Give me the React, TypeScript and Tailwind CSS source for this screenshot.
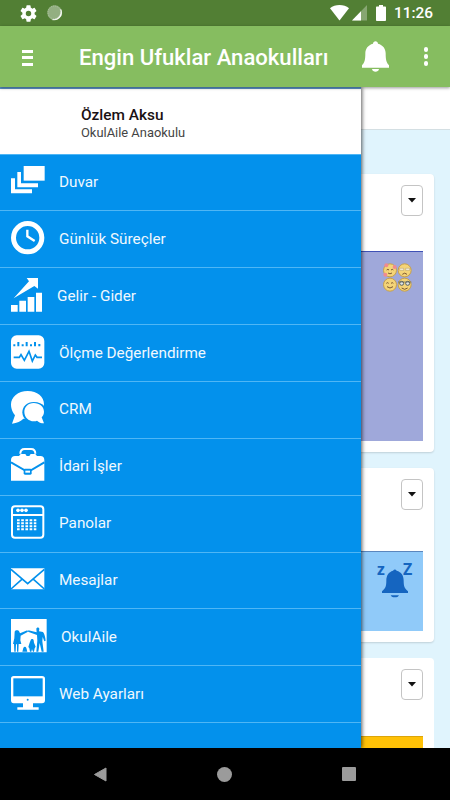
import type { ReactNode } from "react";

type MenuItem = { label: string; width: number; icon: ReactNode };

// every menu icon is drawn on a 102 unit high board, 3 units per pixel
const items: MenuItem[] = [
  {
    label: "Duvar",
    width: 102,
    icon: (
      <g fill="#fff">
        <path d="M38 6h63v44H38z" />
        <path d="M19 24h11v34h51v12H19z" />
        <path d="M0 43h12v33h51v12H0z" />
      </g>
    ),
  },
  {
    label: "Günlük Süreçler",
    width: 102,
    icon: (
      <g fill="none" stroke="#fff">
        <circle cx="50" cy="50" r="42.5" strokeWidth="15" />
        <path d="M49 26v20l22 14" strokeWidth="7" />
      </g>
    ),
  },
  {
    label: "Gelir - Gider",
    width: 96,
    icon: (
      <g fill="#fff">
        <path d="M0 81h20v20H0zM25 68h20v33H25zM50 57h20v44H50zM75 44h18v57H75z" />
        <path d="M8 61L54 10 47 0h34v32l-11-8z" />
      </g>
    ),
  },
  {
    label: "Ölçme Değerlendirme",
    width: 102,
    icon: (
      <g>
        <rect width="100" height="100" y="1" rx="17" fill="#fff" />
        <path
          d="M7 28h6v6H7zM19 21h6v13h-6zM32 28h6v6h-6zM44 21h6v13h-6zM57 28h6v6h-6zM69 21h6v13h-6zM82 27h6v7h-6z"
          fill="#0391ec"
        />
        <path
          d="M8 67h17l5-8 10 17 14-27 10 29 9-18 5 7h15"
          fill="none"
          stroke="#0391ec"
          strokeWidth="5"
        />
      </g>
    ),
  },
  {
    label: "CRM",
    width: 102,
    icon: (
      <g>
        <path
          d="M50 0C21 0 0 18 0 40c0 16 6 25 12 33L3 98c15-2 27-8 34-15 34 4 62-12 62-43C99 17 79 0 50 0z"
          fill="#fff"
        />
        <path
          d="M68 33c-20 0-34 14-34 31s14 32 34 32h32V46c-6-8-17-13-32-13z"
          fill="#0391ec"
        />
        <path
          d="M68 36c-17 0-28 12-28 27s12 28 29 28c4 0 7-1 9-2 5 5 12 8 21 8l-7-18c4-5 7-9 7-17 0-14-13-26-31-26z"
          fill="#fff"
        />
      </g>
    ),
  },
  {
    label: "İdari İşler",
    width: 102,
    icon: (
      <g>
        <path
          d="M0 36c0-8 5-12 12-12h12l5-6h14l4 6h8l4-6h14l5 6h10c8 0 12 4 12 12v62H0z"
          fill="#fff"
        />
        <path
          d="M28 17c0-9 4-14 13-14h19c9 0 13 5 13 14"
          fill="none"
          stroke="#fff"
          strokeWidth="6"
        />
        <path
          d="M0 43l40 23h21l39-23"
          fill="none"
          stroke="#0391ec"
          strokeWidth="6"
        />
        <rect x="38" y="62" width="24" height="18" rx="4" fill="#0391ec" />
        <rect x="43" y="68" width="14" height="6" fill="#fff" />
      </g>
    ),
  },
  {
    label: "Panolar",
    width: 102,
    icon: (
      <g fill="#fff">
        <rect
          x="3"
          y="4"
          width="94"
          height="94"
          rx="9"
          fill="none"
          stroke="#fff"
          strokeWidth="6"
        />
        <path d="M4 27h92v6H4z" />
        <circle cx="21" cy="16" r="5.5" />
        <circle cx="33" cy="16" r="5.5" />
        <circle cx="45" cy="16" r="5.5" />
        <path
          d="M18 46h58M18 55h58M18 64h58M18 73h58"
          stroke="#fff"
          strokeWidth="6"
          strokeDasharray="8 4.6"
        />
      </g>
    ),
  },
  {
    label: "Mesajlar",
    width: 102,
    icon: (
      <g>
        <path d="M0 19h100v63H0z" fill="#fff" />
        <path
          d="M0 22l50 43 50-43M0 81l35-31M100 81L65 50"
          fill="none"
          stroke="#0391ec"
          strokeWidth="5"
        />
      </g>
    ),
  },
  {
    label: "OkulAile",
    width: 108,
    icon: (
      <g>
        <path d="M0 0h107v100H0z" fill="#fff" />
        <g fill="#0391ec">
          <path d="M11 38c2-5 11-6 14 0l2 5 22-9 2 4-22 12-1 14 3 11h-8l-1 23h-4V76h-3l-1 22h-4l-1-23H6l4-17z" />
          <path d="M76 30c0-6 9-6 9 0l-1 7 12 2c5 7 7 16 8 26l-4 2-5-13-1 13 4 31h-6l-6-26-4 26h-6l3-33-1-17-27-10 1-4 25 6z" />
          <path d="M59 64c1-5 8-5 9 0l1 7 5 12-3 5-2 10H57l-2-10-3-4 4-13z" />
          <path d="M37 87c2-5 7-5 9 0l3 11H34z" />
        </g>
        <path d="M63 90l3 9h-5z" fill="#fff" />
      </g>
    ),
  },
  {
    label: "Web Ayarları",
    width: 102,
    icon: (
      <g fill="#fff">
        <path d="M8 0h85c6 0 9 3 9 8v65c0 6-3 9-9 9H66v12h17v7H19v-7h17V82H8c-5 0-8-3-8-9V8c0-5 3-8 8-8z" />
        <path d="M7 7h88v54H7z" fill="#0391ec" />
        <circle cx="50" cy="71" r="3" fill="#0391ec" />
      </g>
    ),
  },
];

function StatusBar() {
  return (
    <div className="flex h-[26px] shrink-0 items-center bg-[#527f34] pr-[18px] pl-5 text-white">
      <svg width="17" height="17" viewBox="2 2 20 20" fill="#fff">
        <path d="M19.14 12.94c.04-.3.06-.61.06-.94s-.02-.64-.07-.94l2.03-1.58a.49.49 0 0 0 .12-.61l-1.92-3.32a.49.49 0 0 0-.59-.22l-2.39.96a7 7 0 0 0-1.62-.94l-.36-2.54a.48.48 0 0 0-.48-.41h-3.84a.48.48 0 0 0-.47.41l-.36 2.54c-.59.24-1.13.57-1.62.94l-2.39-.96a.48.48 0 0 0-.59.22L2.74 8.87a.48.48 0 0 0 .12.61l2.03 1.58a6 6 0 0 0 0 1.88l-2.03 1.58a.49.49 0 0 0-.12.61l1.92 3.32c.12.22.37.29.59.22l2.39-.96c.5.38 1.03.7 1.62.94l.36 2.54c.05.24.24.41.48.41h3.84c.24 0 .44-.17.47-.41l.36-2.54a7 7 0 0 0 1.62-.94l2.39.96c.22.08.47 0 .59-.22l1.92-3.32a.48.48 0 0 0-.12-.61zM12 15.2a3.2 3.2 0 1 1 0-6.4 3.2 3.2 0 0 1 0 6.4z" />
      </svg>
      <svg className="ml-[9px]" width="18" height="18" viewBox="0 0 18 18">
        <circle cx="8.700" cy="8.700" r="7.400" fill="#93af81" />
        <circle
          cx="8.3"
          cy="8.4"
          r="6.4"
          fill="none"
          stroke="#b3c8a5"
          strokeWidth="0.8"
          strokeDasharray="1 1"
        />
        <path
          d="M14.8 5.4c2.800 6-2.300 11.400-8.300 10.300 5.500 0 9.500-4.600 8.300-10.300z"
          fill="#fff"
          stroke="#fff"
          strokeWidth="0.6"
        />
      </svg>
      <svg className="ml-auto" width="19" height="16" viewBox="0 0 19 16">
        <path d="M9.5 15.6L0 3.2C5-1 14-1 19 3.2z" fill="#fff" />
      </svg>
      <svg className="ml-[3px]" width="15" height="16" viewBox="0 0 15 16">
        <path d="M15 0v15.5H0z" fill="#87a672" />
        <path d="M9 6.200v9.300H0z" fill="#fff" />
      </svg>
      <svg className="ml-[9px]" width="10" height="16" viewBox="0 0 10 16">
        <path d="M3 0h4v1.6h2.3q.7 0 .7.8v12.7q0 .9-.8.9H.8q-.8 0-.8-.9V2.4q0-.8.7-.8H3z" fill="#fff" />
      </svg>
      <span className="ml-2 w-[38px] pt-[2px] text-[15.4px] leading-none font-medium">
        11:26
      </span>
    </div>
  );
}

function TopBar() {
  return (
    <header className="relative z-10 flex h-[61px] shrink-0 items-center bg-[#86bd60] text-white shadow-[0_1px_3px_rgba(0,0,0,0.4)]">
      <div className="mt-[2px] ml-[22px] flex w-[11px] flex-col gap-[3.5px]">
        <span className="h-[3px] bg-white" />
        <span className="h-[3px] bg-white" />
        <span className="h-[3px] bg-white" />
      </div>
      <h1 className="mt-[2px] ml-[46px] w-[283px] text-[22.1px] font-medium whitespace-nowrap">
        Engin Ufuklar Anaokulları
      </h1>
      <svg width="27" height="31" viewBox="0 0 81 93" fill="#fff">
        <path d="M33 8c0-10 15-10 15 0 15 4 23 15 23 29 0 19 2 29 10 36v7H0v-7c8-7 10-17 10-36C10 23 18 12 33 8zM30 84h21c-1 11-20 11-21 0z" />
      </svg>
      <div className="ml-[35px] flex flex-col gap-[2.5px]">
        <span className="size-[4.4px] rounded-full bg-white" />
        <span className="size-[4.4px] rounded-full bg-white" />
        <span className="size-[4.4px] rounded-full bg-white" />
      </div>
    </header>
  );
}

function Drawer() {
  return (
    <aside className="absolute inset-y-0 left-0 flex w-[361px] flex-col overflow-hidden bg-[#0391ec] shadow-[1px_0_4px_rgba(0,0,0,0.65)]">
      <div className="h-[66.5px] shrink-0 border-t-2 border-[#5b93c8] bg-white pt-[17px] pl-[81px]">
        <p className="text-[15.4px] leading-[19px] font-medium text-[#1a1114]">
          Özlem Aksu
        </p>
        <p className="text-[12.9px] leading-[16px] text-[#444]">
          OkulAile Anaokulu
        </p>
      </div>
      <nav>
        {items.map((item) => (
          <a
            key={item.label}
            className="flex h-[56.87px] items-start gap-[14px] border-t border-[#4fb6f5] pt-[9.5px] pl-[11px]"
          >
            <svg
              width={item.width / 3}
              height="34"
              viewBox={`0 0 ${item.width} 102`}
            >
              {item.icon}
            </svg>
            <span className="text-[15.3px] leading-[36px] whitespace-nowrap text-[#f0f8fe]">
              {item.label}
            </span>
          </a>
        ))}
        <div className="border-t border-[#4fb6f5]" />
      </nav>
    </aside>
  );
}

function SelectButton() {
  return (
    <button className="mr-[11px] ml-auto flex h-[31px] w-[22px] items-center justify-center rounded-[4px] border border-[#c4c4c4] bg-white">
      <svg width="8" height="5" viewBox="0 0 8 5">
        <path d="M0 0h8L4 4.5z" fill="#111" />
      </svg>
    </button>
  );
}

function Smileys() {
  return (
    <svg width="29" height="29" viewBox="0 0 87 87">
      <g fill="#f4d478" stroke="#c6a04c" strokeWidth="3">
        <circle cx="21" cy="22" r="19.5" />
        <circle cx="65" cy="22" r="19.5" />
        <circle cx="21" cy="65" r="19.5" />
        <circle cx="65" cy="65" r="19.5" />
      </g>
      <g fill="none" stroke="#7b5732" strokeWidth="3">
        <path d="M11 21q4-4 7 0M24 21q4-4 7 0M15 30q6 5 12 0" />
        <path d="M58 34q7-7 14 0" />
        <path d="M10 61q4-4 7 0M24 61q4-4 7 0M12 71q9 8 18 0" />
        <path d="M56 75q9 8 18 0" />
      </g>
      <g fill="#f08a8f">
        <circle cx="10" cy="7" r="6" />
        <circle cx="35" cy="12" r="6" />
        <circle cx="7" cy="35" r="6" />
      </g>
      <path d="M50 16h12v6H50zM68 16h12v6H68z" fill="#f7efd8" stroke="#8d7a56" />
      <g fill="#dfe4e4" stroke="#59615f" strokeWidth="3">
        <circle cx="56" cy="61" r="6" />
        <circle cx="74" cy="61" r="6" />
      </g>
      <path d="M45 57h40" stroke="#59615f" strokeWidth="2" />
    </svg>
  );
}

function SleepingBell() {
  return (
    <div className="flex items-start font-['Open_Sans'] font-bold text-[#1565c0]">
      <span className="w-[9px] text-[16px] leading-[13px]">z</span>
      <svg
        className="mt-[6px] -mr-[5px] -ml-[4px]"
        width="26"
        height="29"
        viewBox="0 0 78 87"
        fill="#1565c0"
      >
        <path d="M33 5q6-7 11 0c14 4 21 14 21 30 0 18 3 23 13 32v5H0v-5c10-9 13-14 13-32C13 19 20 9 33 5zM26 79h25q-3 6-8 6h-9q-5 0-8-6z" />
      </svg>
      <span className="w-[9px] text-[16px] leading-[12px]">Z</span>
    </div>
  );
}

function Feed() {
  return (
    <main className="flex h-full flex-col bg-[#e0f4fd]">
      <div className="h-[43px] shrink-0 border-b border-[#d4dfe3] bg-white" />
      <section className="mt-[44px] mr-4 h-[278px] shrink-0 rounded bg-white pt-[11px] shadow-[0_1px_2px_rgba(0,0,0,0.15)]">
        <SelectButton />
        <div className="mt-[35px] mr-[11px] flex h-[190px] justify-end border-t border-[#3f51b5] bg-[#9fa8da] pt-[11px] pr-[11px]">
          <Smileys />
        </div>
      </section>
      <section className="mt-4 mr-4 h-[174px] shrink-0 rounded bg-white pt-[11px] shadow-[0_1px_2px_rgba(0,0,0,0.15)]">
        <SelectButton />
        <div className="mt-[41px] mr-[11px] flex h-[80px] justify-end border-t border-[#5b86bd] bg-[#90caf9] pt-[11px] pr-[11px]">
          <SleepingBell />
        </div>
      </section>
      <section className="mt-4 mr-4 h-[200px] shrink-0 rounded bg-white pt-[11px]">
        <SelectButton />
        <div className="mt-[36px] mr-[11px] h-[100px] border-t border-[#dca50a] bg-[#ffc107]" />
      </section>
    </main>
  );
}

function NavigationBar() {
  return (
    <footer className="flex h-[52px] shrink-0 items-center bg-black pl-[93px]">
      <svg width="14" height="15" viewBox="0 0 14 15">
        <path d="M13 1v13L1.5 7.5z" fill="#9b9b9b" stroke="#9b9b9b" strokeLinejoin="round" />
      </svg>
      <span className="ml-[110px] size-[15px] rounded-full bg-[#9b9b9b]" />
      <span className="ml-[110px] size-[14px] rounded-[1px] bg-[#9b9b9b]" />
    </footer>
  );
}

export default function App() {
  return (
    <div className="flex h-[800px] w-[450px] flex-col overflow-hidden font-[Roboto,sans-serif]">
      <StatusBar />
      <TopBar />
      <div className="relative min-h-0 flex-1 overflow-hidden">
        <Feed />
        <Drawer />
      </div>
      <NavigationBar />
    </div>
  );
}
